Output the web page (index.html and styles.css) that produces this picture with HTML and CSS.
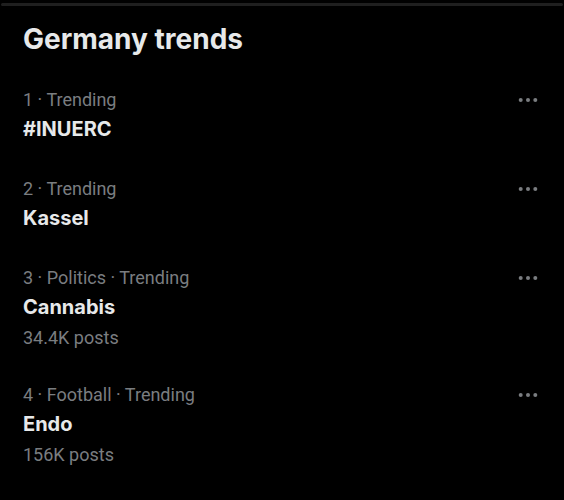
FILE: index.html
```html
<!DOCTYPE html>
<html lang="en">
<head>
    <meta charset="UTF-8">
    <meta name="viewport" content="width=device-width, initial-scale=1.0">
    <title>Germany trends</title>
    <link rel="stylesheet" href="styles.css">
</head>
<body>
    <div class="topbar"></div>
    <div class="trends">
        <h2 class="title">Germany trends</h2>

        <!-- 1 -->
        <div class="trend">
            <div class="trend-head">
                <span class="meta">1 · Trending</span>
                <svg class="more" viewBox="0 0 24 24"><circle cx="4.7" cy="12" r="2"/><circle cx="12" cy="12" r="2"/><circle cx="19.3" cy="12" r="2"/></svg>
            </div>
            <div class="name">#INUERC</div>
        </div>

        <!-- 2 -->
        <div class="trend">
            <div class="trend-head">
                <span class="meta">2 · Trending</span>
                <svg class="more" viewBox="0 0 24 24"><circle cx="4.7" cy="12" r="2"/><circle cx="12" cy="12" r="2"/><circle cx="19.3" cy="12" r="2"/></svg>
            </div>
            <div class="name">Kassel</div>
        </div>

        <!-- 3 -->
        <div class="trend">
            <div class="trend-head">
                <span class="meta">3 · Politics · Trending</span>
                <svg class="more" viewBox="0 0 24 24"><circle cx="4.7" cy="12" r="2"/><circle cx="12" cy="12" r="2"/><circle cx="19.3" cy="12" r="2"/></svg>
            </div>
            <div class="name">Cannabis</div>
            <div class="posts">34.4K posts</div>
        </div>

        <!-- 4 -->
        <div class="trend">
            <div class="trend-head">
                <span class="meta">4 · Football · Trending</span>
                <svg class="more" viewBox="0 0 24 24"><circle cx="4.7" cy="12" r="2"/><circle cx="12" cy="12" r="2"/><circle cx="19.3" cy="12" r="2"/></svg>
            </div>
            <div class="name">Endo</div>
            <div class="posts">156K posts</div>
        </div>
    </div>
</body>
</html>
```

FILE: styles.css
```css
body {
    font-family: Roboto, "Liberation Sans", sans-serif;
    margin: 0;
    background-color: #000;
    color: #e7e9ea;
}
.topbar {
    height: 3px;
    margin: 3px 1px 0;
    border-radius: 2px;
    background-color: #1f1f1f;
}
.trends {
    padding: 17px 0 0;
}
.title {
    margin: 0;
    padding: 0 23px 15px;
    font-family: Inter, Roboto, sans-serif;
    font-size: 28px;
    line-height: 32px;
    font-weight: 700;
}
.trend {
    padding: 18px 24px 18px 23px;
}
.trend-head {
    display: flex;
    justify-content: space-between;
    align-items: flex-start;
}
.meta,
.posts {
    color: #7a7d80;
    font-size: 18px;
    line-height: 24px;
}
.more {
    width: 24px;
    height: 24px;
    fill: #7a7d80;
}
.name {
    margin-top: 5px;
    font-family: Inter, Roboto, sans-serif;
    font-size: 20px;
    line-height: 24px;
    font-weight: 700;
}
.posts {
    margin-top: 10px;
    line-height: 18px;
}
```
